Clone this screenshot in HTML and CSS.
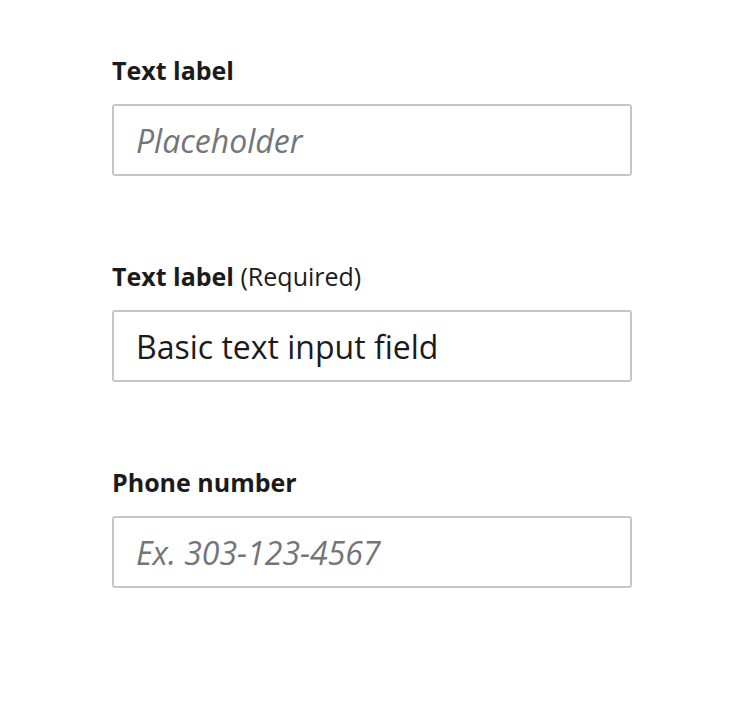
FILE: index.html
```html
<!DOCTYPE html>
<html lang="en">
<head>
<meta charset="utf-8">
<title>Text inputs</title>
<link rel="stylesheet" href="styles.css">
</head>
<body>
<form class="form">
  <div class="field">
    <label class="label" for="f1">Text label</label>
    <input class="input" id="f1" type="text" placeholder="Placeholder">
  </div>
  <div class="field">
    <label class="label" for="f2">Text label <span class="hint">(Required)</span></label>
    <input class="input" id="f2" type="text" value="Basic text input field">
  </div>
  <div class="field">
    <label class="label" for="f3">Phone number</label>
    <input class="input" id="f3" type="tel" placeholder="Ex. 303-123-4567">
  </div>
</form>
</body>
</html>
```

FILE: styles.css
```css
html, body {
  margin: 0;
  padding: 0;
  background: #ffffff;
}
body {
  font-family: "Open Sans", "Noto Sans", sans-serif;
  color: #1b1b1b;
}
.form {
  display: flex;
  flex-direction: column;
  gap: 82px;
  padding: 52px 0 0 112px;
}
.field {
  display: flex;
  flex-direction: column;
  gap: 16px;
}
.label {
  font-size: 25px;
  line-height: 36px;
  font-weight: 700;
  color: #1b1b1b;
}
.hint {
  font-weight: 400;
}
.input {
  box-sizing: border-box;
  width: 520px;
  height: 72px;
  margin: 0;
  padding: 0 22px;
  border: 2px solid #c6c6c6;
  border-radius: 3px;
  background: #ffffff;
  font-family: "Open Sans", "Noto Sans", sans-serif;
  font-size: 32px;
  color: #1b1b1b;
  outline: none;
}
.input::placeholder {
  color: #71767a;
  font-style: italic;
  opacity: 1;
}
```
